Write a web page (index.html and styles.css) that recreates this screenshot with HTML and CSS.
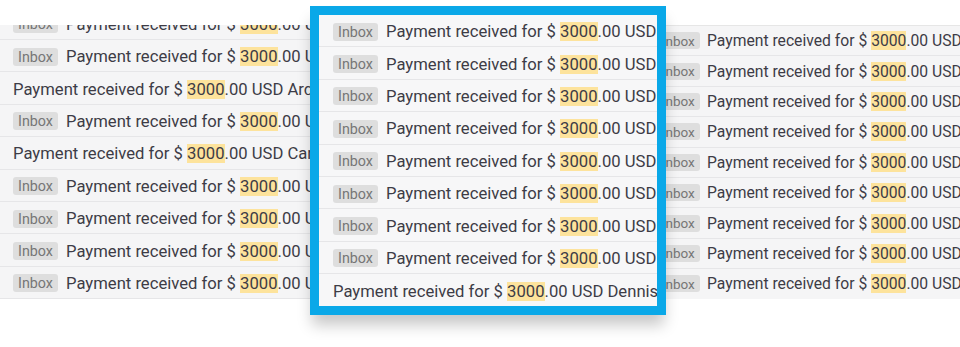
FILE: index.html
```html
<!DOCTYPE html>
<html lang="en">
<head>
<meta charset="utf-8">
<title>Search results</title>
<link rel="stylesheet" href="styles.css">
</head>
<body>
<div class="stage">
  <div class="panel panel-left">
    <div class="list list-left">
      <div class="row"><span class="badge">Inbox</span><span class="subj">Payment received for $ <mark>3000</mark>.00 USD Alma Reyes</span></div>
      <div class="row"><span class="badge">Inbox</span><span class="subj">Payment received for $ <mark>3000</mark>.00 USD Bruno Lee</span></div>
      <div class="row"><span class="subj">Payment received for $ <mark>3000</mark>.00 USD Arden Cole</span></div>
      <div class="row"><span class="badge">Inbox</span><span class="subj">Payment received for $ <mark>3000</mark>.00 USD Nina Park</span></div>
      <div class="row"><span class="subj">Payment received for $ <mark>3000</mark>.00 USD Carter Hill</span></div>
      <div class="row"><span class="badge">Inbox</span><span class="subj">Payment received for $ <mark>3000</mark>.00 USD Omar Diaz</span></div>
      <div class="row"><span class="badge">Inbox</span><span class="subj">Payment received for $ <mark>3000</mark>.00 USD Iris Wong</span></div>
      <div class="row"><span class="badge">Inbox</span><span class="subj">Payment received for $ <mark>3000</mark>.00 USD Leo Grant</span></div>
      <div class="row"><span class="badge">Inbox</span><span class="subj">Payment received for $ <mark>3000</mark>.00 USD Mia Stone</span></div>
    </div>
  </div>

  <div class="panel panel-right">
    <div class="list list-right">
      <div class="row"><span class="badge">Inbox</span><span class="subj">Payment received for $ <mark>3000</mark>.00 USD Alma Reyes</span></div>
      <div class="row"><span class="badge">Inbox</span><span class="subj">Payment received for $ <mark>3000</mark>.00 USD Bruno Lee</span></div>
      <div class="row"><span class="badge">Inbox</span><span class="subj">Payment received for $ <mark>3000</mark>.00 USD Nina Park</span></div>
      <div class="row"><span class="badge">Inbox</span><span class="subj">Payment received for $ <mark>3000</mark>.00 USD Omar Diaz</span></div>
      <div class="row"><span class="badge">Inbox</span><span class="subj">Payment received for $ <mark>3000</mark>.00 USD Iris Wong</span></div>
      <div class="row"><span class="badge">Inbox</span><span class="subj">Payment received for $ <mark>3000</mark>.00 USD Leo Grant</span></div>
      <div class="row"><span class="badge">Inbox</span><span class="subj">Payment received for $ <mark>3000</mark>.00 USD Mia Stone</span></div>
      <div class="row"><span class="badge">Inbox</span><span class="subj">Payment received for $ <mark>3000</mark>.00 USD Paul Ross</span></div>
      <div class="row"><span class="badge">Inbox</span><span class="subj">Payment received for $ <mark>3000</mark>.00 USD Dennis Hale</span></div>
    </div>
  </div>

  <div class="popup">
    <div class="list list-center">
      <div class="row"><span class="badge">Inbox</span><span class="subj">Payment received for $ <mark>3000</mark>.00 USD Alma Reyes</span></div>
      <div class="row"><span class="badge">Inbox</span><span class="subj">Payment received for $ <mark>3000</mark>.00 USD Bruno Lee</span></div>
      <div class="row"><span class="badge">Inbox</span><span class="subj">Payment received for $ <mark>3000</mark>.00 USD Nina Park</span></div>
      <div class="row"><span class="badge">Inbox</span><span class="subj">Payment received for $ <mark>3000</mark>.00 USD Omar Diaz</span></div>
      <div class="row"><span class="badge">Inbox</span><span class="subj">Payment received for $ <mark>3000</mark>.00 USD Iris Wong</span></div>
      <div class="row"><span class="badge">Inbox</span><span class="subj">Payment received for $ <mark>3000</mark>.00 USD Leo Grant</span></div>
      <div class="row"><span class="badge">Inbox</span><span class="subj">Payment received for $ <mark>3000</mark>.00 USD Mia Stone</span></div>
      <div class="row"><span class="badge">Inbox</span><span class="subj">Payment received for $ <mark>3000</mark>.00 USD Paul Ross</span></div>
      <div class="row"><span class="subj">Payment received for $ <mark>3000</mark>.00 USD Dennis Hale</span></div>
    </div>
  </div>
</div>
</body>
</html>
```

FILE: styles.css
```css
* { box-sizing: border-box; }

html, body {
  margin: 0;
  padding: 0;
  background: #ffffff;
}

body {
  font-family: Roboto, "Liberation Sans", Arial, sans-serif;
  color: #3d3c46;
  overflow: hidden;
}

.stage {
  position: relative;
  width: 960px;
  height: 347px;
  display: flex;
  justify-content: space-between;
  align-items: flex-start;
  padding-top: 25px;
}

.panel {
  height: 274px;
  overflow: hidden;
  background: #f5f5f6;
}

.panel-left {
  width: 330px;
}

.panel-right {
  width: 320px;
  border-top: 1px solid #e6e6e6;
}

.list-left {
  margin-top: -17.4px;
}

.row {
  display: flex;
  align-items: center;
  gap: 8px;
  white-space: nowrap;
  border-bottom: 1px solid #e6e6e8;
  font-size: 16.65px;
}

.list-left .row {
  height: 32.4px;
  padding: 2px 13px 0;
}

.list-right .row {
  height: 30.4px;
  padding: 0 17px;
  gap: 7.5px;
  font-size: 15.7px;
}

.list-center .row {
  height: 32.4px;
  padding: 2px 14px 0;
}

.list-center .row:last-child {
  border-bottom: none;
}

.badge {
  flex: none;
  display: inline-flex;
  align-items: center;
  justify-content: center;
  width: 45px;
  height: 18px;
  border-radius: 3px;
  background: #dedede;
  color: #767676;
  font-size: 14.3px;
}

.list-right .badge {
  width: 42.5px;
  height: 17px;
  font-size: 13.5px;
}

.subj {
  flex: none;
}

mark {
  background: #fde39c;
  color: inherit;
}

.popup {
  position: absolute;
  left: 310px;
  top: 6px;
  width: 356px;
  height: 309px;
  border: 9px solid #0aa8e8;
  background: #f7f7f8;
  overflow: hidden;
  box-shadow: 0 12px 14px -2px rgba(0, 0, 0, 0.22);
}
```
